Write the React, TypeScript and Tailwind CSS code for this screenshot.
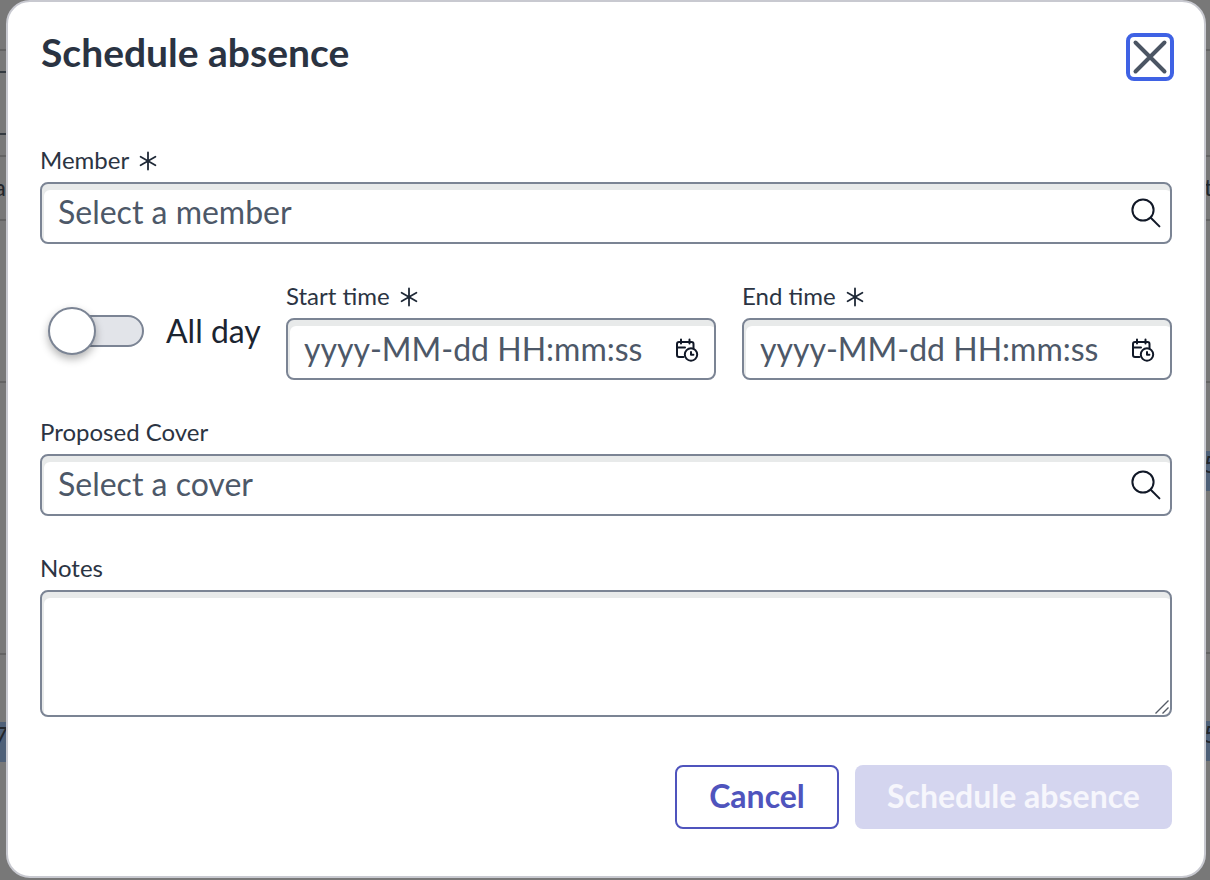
import { ReactNode } from "react";

const Asterisk = () => (
  <svg width="20" height="20" viewBox="0 0 20 20" fill="none" stroke="#1f2937" strokeWidth="1.8" strokeLinecap="round" className="ml-[9px] mt-0.5 shrink-0">
    <path d="M10 1.5v17M2.6 5.7l14.8 8.6M17.4 5.7L2.6 14.3" />
  </svg>
);

const SearchIcon = () => (
  <svg width="30" height="32" viewBox="0 0 30 32" fill="none" stroke="#111827" strokeWidth="2" strokeLinecap="round" className="shrink-0">
    <circle cx="12" cy="13" r="10.6" />
    <path d="M20 21l8.4 8.4" />
  </svg>
);

const CalendarClockIcon = () => (
  <svg width="24" height="24" viewBox="0 0 24 24" fill="none" stroke="#111827" strokeWidth="2" strokeLinecap="round" strokeLinejoin="round" className="mt-0.5 shrink-0">
    <path d="M8.5 19H4a2 2 0 0 1-2-2V6a2 2 0 0 1 2-2h12.500a2 2 0 0 1 2 2v4" />
    <path d="M6 1.500v4M14.500 1.500v4M2 9.500h8" />
    <circle cx="16" cy="16.500" r="6.200" />
    <path d="M16 14v2.700h2.400" />
  </svg>
);

const fieldBox =
  "rounded-lg border-2 border-[#7b8494] bg-white shadow-[inset_2px_6px_0_0_#e8eaea]";

const Label = ({ text, required }: { text: string; required?: boolean }) => (
  <label className="flex h-[30px] items-center pb-0.5 text-2xl leading-[28px] text-[#2b3443]">
    {text}
    {required && <Asterisk />}
  </label>
);

const SearchField = ({ placeholder }: { placeholder: string }) => (
  <div className={`flex h-[62px] items-center pl-4 pr-[9px] ${fieldBox}`}>
    <input
      placeholder={placeholder}
      className="min-w-0 flex-1 bg-transparent pb-0.5 text-[32px] outline-none placeholder:text-[#4d5868]"
    />
    <SearchIcon />
  </div>
);

const TimeField = ({ label }: { label: string }) => (
  <div className="flex w-[430px] shrink-0 flex-col gap-1.5">
    <Label text={label} required />
    <div className={`flex h-[62px] items-center pl-4 pr-[15px] ${fieldBox}`}>
      <input
        placeholder="yyyy-MM-dd HH:mm:ss"
        className="min-w-0 flex-1 bg-transparent text-[32px] outline-none placeholder:text-[#4d5868]"
      />
      <CalendarClockIcon />
    </div>
  </div>
);

type Row = { h: number; cls?: string; text?: ReactNode };

// what is left visible of the table behind the dialog
const leftRows: Row[] = [
  { h: 49 }, { h: 2, cls: "bg-[#636363]" }, { h: 20 }, { h: 2, cls: "bg-[#333a40]" },
  { h: 60 }, { h: 2, cls: "bg-[#333a40]" }, { h: 20 }, { h: 2, cls: "bg-[#636363]" },
  { h: 17 }, { h: 26, text: "a" }, { h: 19 }, { h: 2, cls: "bg-[#636363]" },
  { h: 160 }, { h: 2, cls: "bg-[#636363]" }, { h: 270 }, { h: 2, cls: "bg-[#636363]" },
  { h: 67 }, { h: 40, cls: "bg-[#4e6078]", text: "7" },
];

const rightRows: Row[] = [
  { h: 49 }, { h: 2, cls: "bg-[#636363]" }, { h: 104 }, { h: 2, cls: "bg-[#636363]" },
  { h: 17 }, { h: 26, text: "t" }, { h: 19 }, { h: 2, cls: "bg-[#636363]" },
  { h: 160 }, { h: 2, cls: "bg-[#636363]" }, { h: 68 }, { h: 40, cls: "bg-[#4e6078]", text: "5" },
  { h: 161 }, { h: 2, cls: "bg-[#636363]" }, { h: 67 }, { h: 40, cls: "bg-[#4e6078]", text: "5" },
];

const Strip = ({ rows, alignEnd }: { rows: Row[]; alignEnd?: boolean }) => (
  <div className="flex w-2 flex-col">
    {rows.map((row, i) => (
      <div
        key={i}
        style={{ height: row.h }}
        className={`overflow-hidden text-2xl leading-[26px] text-[#22262c] ${alignEnd ? "pl-0.5" : "-ml-1.5"} ${row.cls ?? ""}`}
      >
        {row.text}
      </div>
    ))}
  </div>
);

const App = () => {
  return (
    <div className="relative h-[880px] w-[1210px] overflow-hidden bg-[#787878] font-['Lato',sans-serif]">
      <div className="flex justify-between">
        <Strip rows={leftRows} />
        <Strip rows={rightRows} alignEnd />
      </div>

      <div className="absolute left-1.5 top-0 flex h-[878px] w-[1200px] flex-col rounded-3xl border-2 border-[#c8c9d0] bg-white pl-8 pr-8 pt-[31px]">
        <div className="flex h-12 items-start justify-between">
          <h2 className="pl-px text-[39px] font-bold leading-[38px] text-[#2a3342]">Schedule absence</h2>
          <button className="-mr-0.5 flex size-12 items-center justify-center rounded-lg border-4 border-[#3f62e4]">
            <svg width="36" height="36" viewBox="0 0 36 36" fill="none" stroke="#4b5563" strokeWidth="4" strokeLinecap="round" className="shrink-0">
              <path d="M3.500 3.500l29 29M32.500 3.500l-29 29" />
            </svg>
          </button>
        </div>

        <div className="mt-[65px] flex flex-col gap-1.5">
          <Label text="Member" required />
          <SearchField placeholder="Select a member" />
        </div>

        <div className="mt-[38px] flex">
          <div className="flex h-[98px] w-[246px] shrink-0 items-start pt-[33px]">
            <div className="relative ml-[9px] h-[32px] w-[95px] shrink-0 rounded-full border-2 border-[#7b8494] bg-[#e2e4e9]">
              <div className="absolute -left-[3px] -top-2.5 size-12 rounded-full border-2 border-[#7b8494] bg-white shadow-[0_4px_8px_rgba(0,0,0,0.3)]" />
            </div>
            <span className="ml-[22px] whitespace-nowrap text-[32px] leading-8 text-[#1b2430]">All day</span>
          </div>
          <div className="flex gap-[26px]">
            <TimeField label="Start time" />
            <TimeField label="End time" />
          </div>
        </div>

        <div className="mt-[38px] flex flex-col gap-1.5">
          <Label text="Proposed Cover" />
          <SearchField placeholder="Select a cover" />
        </div>

        <div className="mt-[38px] flex flex-col gap-1.5">
          <Label text="Notes" />
          <div className="relative flex">
            <textarea className={`h-[127px] flex-1 resize-none px-4 py-2 text-[32px] outline-none ${fieldBox}`} />
            <svg width="16" height="16" viewBox="0 0 16 16" fill="none" stroke="#555b66" strokeWidth="1.4" className="absolute bottom-[2px] right-[2px]">
              <path d="M1.500 14.500L14.500 1.500M8.500 14.500L14.500 8.500" />
            </svg>
          </div>
        </div>

        <div className="mt-12 flex justify-end gap-4">
          <button className="h-16 w-[164px] rounded-lg border-2 border-[#4f54bd] bg-white pb-0.5 text-[32px] font-bold text-[#4f54bd]">
            Cancel
          </button>
          <button disabled className="h-16 w-[317px] rounded-lg bg-[#d4d5ef] pb-0.5 text-[32px] font-bold text-[#f6f6fc]">
            Schedule absence
          </button>
        </div>
      </div>
    </div>
  );
};

export default App;
